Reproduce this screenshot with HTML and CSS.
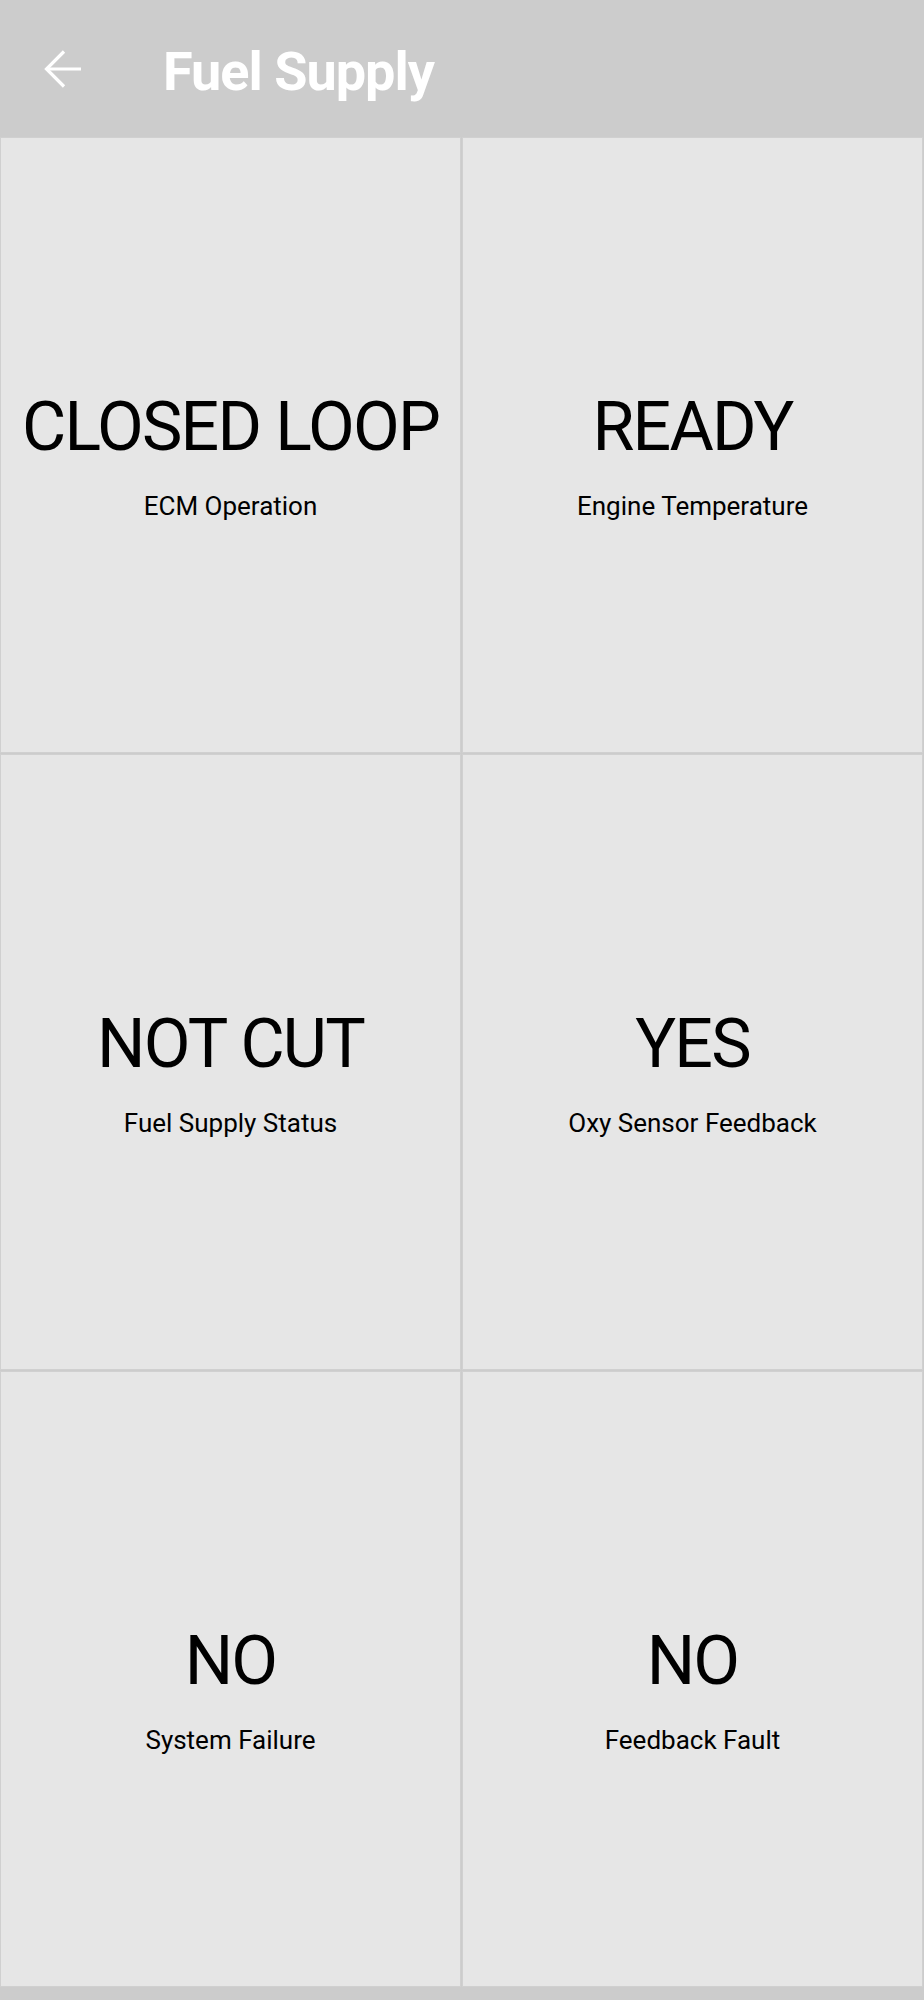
FILE: index.html
```html
<!DOCTYPE html>
<html>
<head>
<meta charset="utf-8">
<link rel="stylesheet" href="styles.css">
</head>
<body>
<div class="app">
  <header class="topbar">
    <svg class="back" width="40" height="40" viewBox="44 48 40 40">
      <polyline points="64,50.5 46.5,68 64,85.5" fill="none" stroke="#fff" stroke-width="3.2"/>
      <line x1="47" y1="68" x2="81" y2="68" stroke="#fff" stroke-width="3.2"/>
    </svg>
    <h1 class="title">Fuel Supply</h1>
  </header>
  <main class="grid">
    <div class="card"><div class="value">CLOSED LOOP</div><div class="label">ECM Operation</div></div>
    <div class="card"><div class="value">READY</div><div class="label">Engine Temperature</div></div>
    <div class="card"><div class="value">NOT CUT</div><div class="label">Fuel Supply Status</div></div>
    <div class="card"><div class="value">YES</div><div class="label">Oxy Sensor Feedback</div></div>
    <div class="card"><div class="value">NO</div><div class="label">System Failure</div></div>
    <div class="card"><div class="value">NO</div><div class="label">Feedback Fault</div></div>
  </main>
</div>
</body>
</html>
```
FILE: styles.css
```css
html, body {
  margin: 0;
  padding: 0;
  background: #cccccc;
  font-family: Roboto, "Noto Sans", sans-serif;
}
.app {
  width: 924px;
  height: 2000px;
  display: flex;
  flex-direction: column;
}
.topbar {
  height: 137px;
  display: flex;
  align-items: center;
  background: #cccccc;
}
.back {
  margin-left: 44px;
  flex: none;
}
.title {
  margin: 0 0 0 79px;
  color: #ffffff;
  font-weight: 700;
  font-size: 54px;
  letter-spacing: -1px;
  line-height: 1;
  padding-top: 6px;
}
.grid {
  display: grid;
  grid-template-columns: 461px 461px;
  grid-auto-rows: 616px;
  column-gap: 1px;
  row-gap: 1px;
}
.card {
  box-sizing: border-box;
  background: #e6e6e6;
  border: 1px solid #d0d0d0;
  display: flex;
  flex-direction: column;
  align-items: center;
  justify-content: center;
  padding-top: 16px;
}
.value {
  font-size: 68px;
  letter-spacing: -1.8px;
  line-height: 82px;
  color: #000;
}
.label {
  font-size: 26px;
  line-height: 28px;
  color: #000;
  margin-top: 24px;
}
```
